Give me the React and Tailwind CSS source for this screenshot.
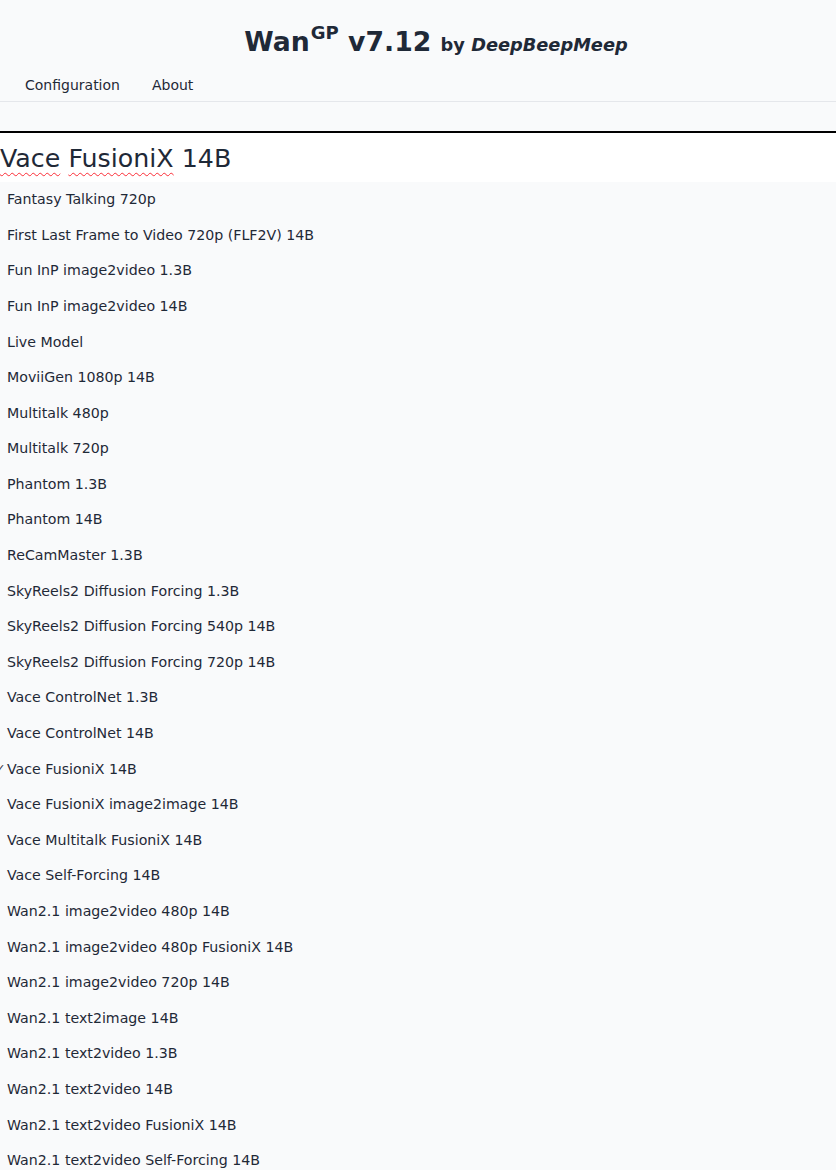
const models = [
  "Fantasy Talking 720p",
  "First Last Frame to Video 720p (FLF2V) 14B",
  "Fun InP image2video 1.3B",
  "Fun InP image2video 14B",
  "Live Model",
  "MoviiGen 1080p 14B",
  "Multitalk 480p",
  "Multitalk 720p",
  "Phantom 1.3B",
  "Phantom 14B",
  "ReCamMaster 1.3B",
  "SkyReels2 Diffusion Forcing 1.3B",
  "SkyReels2 Diffusion Forcing 540p 14B",
  "SkyReels2 Diffusion Forcing 720p 14B",
  "Vace ControlNet 1.3B",
  "Vace ControlNet 14B",
  "Vace FusioniX 14B",
  "Vace FusioniX image2image 14B",
  "Vace Multitalk FusioniX 14B",
  "Vace Self-Forcing 14B",
  "Wan2.1 image2video 480p 14B",
  "Wan2.1 image2video 480p FusioniX 14B",
  "Wan2.1 image2video 720p 14B",
  "Wan2.1 text2image 14B",
  "Wan2.1 text2video 1.3B",
  "Wan2.1 text2video 14B",
  "Wan2.1 text2video FusioniX 14B",
  "Wan2.1 text2video Self-Forcing 14B",
];

const selected = "Vace FusioniX 14B";

export default function App() {
  return (
    <div className="min-h-[1170px] bg-[#f9fafb] text-[#1f2937] font-['DejaVu_Sans',sans-serif] overflow-hidden">
      <header className="h-[70px] flex items-center justify-center pt-[14px] pl-[36px]">
        <h1 className="text-[26.7px] font-bold leading-none">
          Wan<sup className="text-[18px] font-bold relative -top-[12px] ml-[1px]">GP</sup> v7.12{" "}
          <span className="text-[17.8px]">
            by <i>DeepBeepMeep</i>
          </span>
        </h1>
      </header>

      <nav className="flex gap-[32px] px-[25px] h-[32px] items-center text-[14px] border-b border-[#e5e7eb]">
        <span>Configuration</span>
        <span>About</span>
      </nav>

      <div className="h-[29px]" />

      <div className="border-t-2 border-black bg-white h-[51px] flex items-center pt-[2px]">
        <span className="text-[25.3px] leading-none">
          <span className="underline decoration-wavy decoration-red-500 decoration-1 underline-offset-[5px]">Vace</span>{" "}
          <span className="underline decoration-wavy decoration-red-500 decoration-1 underline-offset-[5px]">FusioniX</span>{" "}
          14B
        </span>
      </div>

      <ul className="text-[14.2px]">
        {models.map((m) => (
          <li key={m} className="relative h-[35.6px] flex items-center pl-[7px]">
            {m === selected && (
              <span className="absolute left-[-4px] text-[11px]">✓</span>
            )}
            {m}
          </li>
        ))}
      </ul>
    </div>
  );
}
